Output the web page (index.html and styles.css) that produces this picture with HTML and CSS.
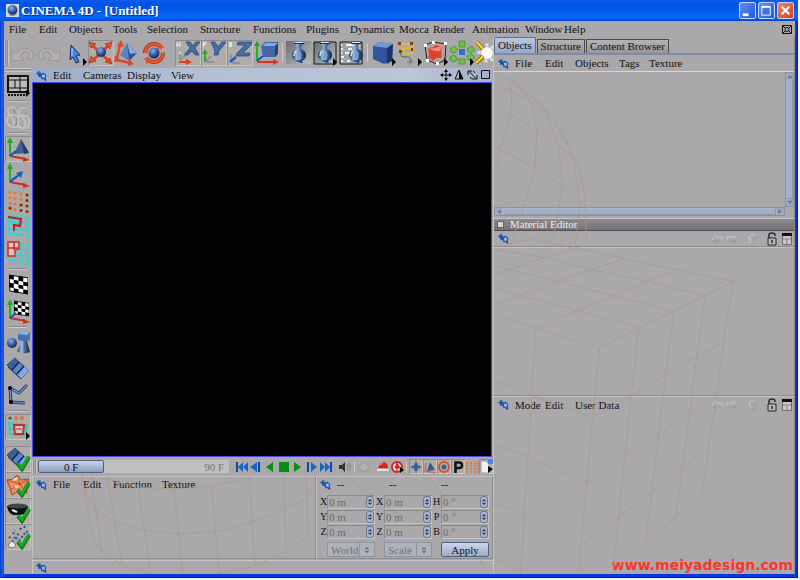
FILE: index.html
```html
<!DOCTYPE html>
<html lang="en">
<head>
<meta charset="utf-8">
<title>CINEMA 4D - [Untitled]</title>
<link rel="stylesheet" href="styles.css">
</head>
<body>
<svg class="defs" aria-hidden="true">
  <defs>
    <linearGradient id="blue" x1="0" y1="0" x2="1" y2="1"><stop offset="0" stop-color="#86a9e0"/><stop offset=".5" stop-color="#4668a8"/><stop offset="1" stop-color="#1d3264"/></linearGradient>
    <radialGradient id="ball" cx=".4" cy=".3" r=".7"><stop offset="0" stop-color="#8fb2ee"/><stop offset=".5" stop-color="#3e65ad"/><stop offset="1" stop-color="#14254d"/></radialGradient>
    <linearGradient id="glass"><stop offset="0" stop-color="#1d304c"/><stop offset=".35" stop-color="#9fc0e6"/><stop offset=".6" stop-color="#41689a"/><stop offset="1" stop-color="#16263e"/></linearGradient>
    <linearGradient id="plate" x1="0" y1="0" x2="1" y2="1"><stop offset="0" stop-color="#686d70"/><stop offset="1" stop-color="#b9bdc0"/></linearGradient>
    <symbol id="pin" viewBox="0 0 12 12"><path d="M7 8l4 3.500" stroke="#3b4254" stroke-width="1.500"/><path d="M0 4l3-3 2 1v2l3-1 3 2v5H6L5 7 3 8 2 5z" fill="#1d4f9f"/><path d="M6 5h4v4H7z" fill="#5f9ff0"/><path d="M7 6h2v1H7z" fill="#e5f2ff"/><path d="M2 3l1-1 1 1" stroke="#5a86c4" fill="none"/></symbol>
    <symbol id="axes" viewBox="0 0 26 26"><path d="M5 20V5" stroke="#16b51c" stroke-width="2"/><path d="M5 1L2 7h6z" fill="#22a626"/><path d="M5 20l16 3" stroke="#d42c18" stroke-width="2"/><path d="M25 24l-7-3v5z" fill="#d42c18"/><path d="M5 20l6-5" stroke="#1452d0" stroke-width="2"/></symbol>
    <symbol id="vase" viewBox="0 0 26 26"><path d="M8 3q5-1.500 10 0l-3 3v3q5 2 5 6 0 4-4 6l1 2H9l1-2q-4-2-4-6 0-4 5-6V6z" fill="url(#glass)"/><path d="M8 3.500h10" stroke="#1d2c45"/><path d="M9 2.500h8" stroke="#d6e6fa"/><path d="M10 11q-2 2-2 5" stroke="#dcebff" stroke-width="1.500" fill="none"/><path d="M13 11q3 4 0 9" stroke="#7fa6d6" stroke-width="2" fill="none"/><path d="M10 21h6" stroke="#1d2c45"/></symbol>
    <symbol id="check" viewBox="0 0 26 26"><path d="M13 18l4 5 7-12" fill="none" stroke="#0b7512" stroke-width="4"/><path d="M13 17l4 5 7-12" fill="none" stroke="#18ad20" stroke-width="2.6"/></symbol>
    <symbol id="checker" viewBox="0 0 20 20"><path d="M0 0l20 3v17L1 17z" fill="#fff" stroke="#000"/><path d="M0 0l5 1v4L0 4zM10 1l5 1v5l-5-1zM5 5l5 1v4L5 9zM15 7l5 1v4l-5-1zM0 8l5 1v5l-5-1zM10 10l5 1v4l-5-1zM5 14l5 1v4l-5-1zM15 15l5 1v4l-5-1z"/></symbol>
    <symbol id="film" viewBox="0 0 26 26"><path d="M2 9l8-7 14 13-8 8z" fill="#5d83c4" stroke="#2c4678"/><path d="M2 9l8-7 4 4-7 8z" fill="#3d5f98"/><path d="M12 18l7-8 5 5-8 8z" fill="#7fa6ea"/><path d="M7 14l7-8M12 18l7-8" stroke="#15264a" stroke-width="1.500"/><path d="M3 11l13 12" stroke="#1d3260"/></symbol>
    <symbol id="updown" viewBox="0 0 8 12"><path d="M4 2l3 3H1zM4 10l3-3H1z" fill="currentColor"/></symbol>
    <symbol id="back" viewBox="0 0 12 12"><path d="M1 6l4-4v2h6v4H5v2z" fill="none" stroke="#c8c6c7"/><path d="M2 7l3 3V8h6" fill="none" stroke="#8c8b8e"/></symbol>
    <symbol id="forward" viewBox="0 0 12 12"><path d="M11 6L7 2v2H1v4h6v2z" fill="none" stroke="#c8c6c7"/><path d="M1 8h6v2l4-4" fill="none" stroke="#8c8b8e"/></symbol>
    <symbol id="up" viewBox="0 0 12 12"><path d="M6 1l4 4H8v6H4V5H2z" fill="none" stroke="#c8c6c7"/><path d="M8 11V5h3M4 11h4" fill="none" stroke="#8c8b8e"/></symbol>
    <symbol id="lock" viewBox="0 0 12 14"><path d="M3 6V3q0-2 3-2t3 2v1" fill="none" stroke="#29292b" stroke-width="1.500"/><path d="M2 6h8v7H2z" fill="#b8b6b9" stroke="#29292b"/><path d="M6 8v3" stroke="#29292b" stroke-width="1.500"/></symbol>
    <symbol id="sheet" viewBox="0 0 12 14"><path d="M1.500 2.500h9v10h-9z" fill="#c9c7ca" stroke="#6d6c70"/><path d="M1 1h10v3H1z" fill="#111"/><path d="M2 7h8M6 7v5" stroke="#858386"/></symbol>
    <symbol id="more" viewBox="0 0 26 26"><path d="M21 18l4 4-4 4z" fill="#000"/></symbol>
  </defs>
</svg>

<div class="window">
  <header class="titlebar">
    <svg class="appicon" viewBox="0 0 13 13" aria-hidden="true"><path d="M0 0h13v13H0z" fill="#d6d9df"/><circle cx="6.500" cy="6" r="5" fill="url(#ball)"/><path d="M3 11q5 2 8-1" stroke="#888" fill="none"/></svg>
    <h1>CINEMA 4D - [Untitled]</h1>
    <button class="win" aria-label="Minimize"><svg viewBox="0 0 16 16"><path d="M3 11h6v3H3z" fill="#fff"/></svg></button>
    <button class="win" aria-label="Maximize"><svg viewBox="0 0 16 16"><path d="M3 4h9v9H3z" fill="none" stroke="#fff"/><path d="M3 4h9" stroke="#fff" stroke-width="2"/></svg></button>
    <button class="win close" aria-label="Close"><svg viewBox="0 0 16 16"><path d="M4 4l8 8M12 4l-8 8" stroke="#fff" stroke-width="2"/></svg></button>
  </header>

  <nav class="menu mainmenu" aria-label="Main">
    <a class="c4" href="#">File</a><a class="c4" href="#">Edit</a><a class="c7" href="#">Objects</a><a class="c5" href="#">Tools</a><a class="c9" href="#">Selection</a><a class="c9" href="#">Structure</a><a class="c9" href="#">Functions</a><a class="c7" href="#">Plugins</a><a class="c8" href="#">Dynamics</a><a class="c5" href="#">Mocca</a><a class="c6" href="#">Render</a><a class="c9" href="#">Animation</a><a class="c6" href="#">Window</a><a class="c4" href="#">Help</a>
    <svg class="restore" viewBox="0 0 10 9" aria-hidden="true"><path d="M.5.5h9v8h-9z" fill="none" stroke="#111"/><circle cx="5" cy="4.500" r="2" fill="none" stroke="#111"/><path d="M1 1l2 2M9 1L7 3M1 8l2-2M9 8L7 6" stroke="#111"/></svg>
  </nav>

  <div class="main">
    <section class="left">
      <div class="toolbar">
        <i class="grip"></i>
        <button class="tool" aria-label="Undo"><svg viewBox="0 0 26 26"><path d="M2 21V10l4 4q8-10 16-3 3 4 0 8h-5q5-6-1-8-4 0-6 6l4 3z" fill="#b3b0ae" stroke="#999693"/></svg></button>
        <button class="tool" aria-label="Redo"><svg viewBox="0 0 26 26"><path d="M24 21V10l-4 4Q12 4 4 11q-3 4 0 8h5q-5-6 1-8 4 0 6 6l-4 3z" fill="#b3b0ae" stroke="#999693"/></svg></button>
        <button class="tool" aria-label="Live selection"><svg viewBox="0 0 26 26"><path d="M9 5l9 10-4 1 3 6-3 1-3-6-3 3z" fill="#4f83db" stroke="#142b60"/><path d="M10 8v8" stroke="#bdd7ff"/><use href="#more"/></svg></button>
        <button class="tool on" aria-label="Move"><svg viewBox="0 0 26 26"><path d="M4 5l18 17M4 21L22 4" stroke="#dc4222" stroke-width="2.500"/><path d="M1 2l7 2-5 4zM24 24l-7-2 5-4zM1 23l2-7 5 5zM24 2l-2 7-5-5z" fill="#e5512e" stroke="#8d2412" stroke-width=".6"/><circle cx="13" cy="12" r="5" fill="url(#ball)"/></svg></button>
        <button class="tool" aria-label="Scale"><svg viewBox="0 0 26 26"><path d="M13 3L6 15l9 6z" fill="#5c82c2"/><path d="M13 3l10 10-8 8z" fill="#2f4f8f"/><path d="M13 3l3 11 7-1z" fill="#86aade"/><path d="M3 19L6 5M3 20l13 3" stroke="#e34525" stroke-width="2.500" fill="none"/><path d="M7 0l3 7-7-1zM20 24l-6 2 1-7zM1 15l-1 7 6-1z" fill="#e34525"/></svg></button>
        <button class="tool" aria-label="Rotate"><svg viewBox="0 0 26 26"><circle cx="14" cy="13" r="9" fill="none" stroke="#a93019" stroke-width="4" stroke-dasharray="23 5"/><circle cx="14" cy="13" r="9" fill="none" stroke="#ee5330" stroke-width="2.500" stroke-dasharray="23 5"/><path d="M20 3l4 5-7 1zM7 24l-3-6 7 1z" fill="#e94b29"/><circle cx="14" cy="13" r="5.500" fill="url(#ball)"/></svg></button>
        <i class="gap"></i>
        <button class="tool on" aria-label="Lock X axis"><svg viewBox="0 0 26 26"><path d="M2 2v5M5 2v5M2 4.500h3" stroke="#eee"/><path d="M11 2h4l3 4 3-4h4l-5 6 4 7h-4l-3-4-4 4H9l6-7z" fill="#476da9" stroke="#233f70" stroke-width=".7"/><path d="M5 20v-7M5 20l6-5" stroke="#8b898c" stroke-width="1.500"/><path d="M3 14l2-3 2 3z" fill="#ccc"/><path d="M4 22h8" stroke="#df3c20" stroke-width="2"/><path d="M11 19l6 3-6 3z" fill="#df3c20"/></svg></button>
        <button class="tool on" aria-label="Lock Y axis"><svg viewBox="0 0 26 26"><path d="M2.500 7V2.500h2v2h-2" stroke="#eee" fill="none"/><path d="M10 2h4l3 5 4-5h4l-7 9-1 4h-4l1-4z" fill="#476da9" stroke="#233f70" stroke-width=".7"/><path d="M4 22V13" stroke="#22b323" stroke-width="2"/><path d="M4 9l3 5H1z" fill="#22b323"/><path d="M5 22h8M5 21l5-5" stroke="#8b898c" stroke-width="1.500"/></svg></button>
        <button class="tool on" aria-label="Lock Z axis"><svg viewBox="0 0 26 26"><path d="M2.500 2.500h2v4h-2zM2 4.500h3" stroke="#eee" fill="none"/><path d="M11 2h14l-1 3-8 8h7l-1 3H9l1-3 8-8h-8z" fill="#476da9" stroke="#233f70" stroke-width=".7"/><path d="M4 22v-8M5 23h8" stroke="#8b898c" stroke-width="1.500"/><path d="M3 22l6-5" stroke="#1658da" stroke-width="2.500"/></svg></button>
        <button class="tool" aria-label="Coordinate system"><svg viewBox="0 0 26 26"><path d="M8 6l4-4h14l-3 4v11H10z" fill="#4168ab"/><path d="M9 6l4-3h12l-3 3z" fill="#83a9e1"/><path d="M22 6l3-3v11l-3 3z" fill="#273f72"/><path d="M4 21V3" stroke="#18b522" stroke-width="2"/><path d="M4 1L1 6h6z" fill="#1aaa22"/><path d="M4 22h17" stroke="#dc3220" stroke-width="2"/><path d="M26 22l-6-3v6z" fill="#dc3220"/><path d="M4 21l6-5" stroke="#1452d0" stroke-width="2"/></svg></button>
        <i class="sep"></i>
        <button class="tool" aria-label="Render view"><svg viewBox="0 0 26 26"><path d="M0 1h25v23H0z" fill="url(#plate)"/><use href="#vase"/></svg></button>
        <button class="tool" aria-label="Render to picture viewer"><svg viewBox="0 0 26 26"><path d="M2 2h22v22H2z" fill="url(#plate)" stroke="#151515"/><use href="#vase"/><use href="#more"/></svg></button>
        <button class="tool" aria-label="Render settings"><svg viewBox="0 0 26 26"><path d="M2 2h22v22H2z" fill="#a4a7a9" stroke="#151515"/><path d="M3 5h19M3 9h11M3 13h9M3 17h9M3 21h9" stroke="#f4f4f4" stroke-width="2"/><path d="M4 5h4M5 9h5M4 13h3M6 17h5M5 21h4" stroke="#444"/><use href="#vase" x="5"/></svg></button>
        <i class="sep"></i>
        <button class="tool" aria-label="Cube"><svg viewBox="0 0 26 26"><path d="M2 6l6-4 14 2-1 17-8 3L2 19z" fill="#32549a"/><path d="M2 6l6-4 14 2-6 4z" fill="#7199da"/><path d="M16 8l6-4-1 17-5 3z" fill="#1b3369"/><use href="#more"/></svg></button>
        <button class="tool" aria-label="Spline"><svg viewBox="0 0 26 26"><path d="M2 4h12q4 1 0 4-9 0-10 4 6 3 12 1" fill="none" stroke="#ecc30c" stroke-width="1.500"/><path d="M5 12q-4 4 2 5 8-1 7 5" fill="none" stroke="#676260"/><path d="M1 2h3v3H1zM13 2h3v3h-3zM2 10h3v3H2zM14 8h2v3h-2z" fill="#8b3b0b"/><path d="M10 22h6M13 19v6" stroke="#777"/><use href="#more"/></svg></button>
        <button class="tool" aria-label="HyperNURBS"><svg viewBox="0 0 26 26"><path d="M2 5l8-3 13 2-1 16-8 4L4 20z" fill="#b1a5a3" stroke="#222"/><path d="M5 8q5 0 8-3 4 2 7 1-3 6-1 12-6-1-9 3-2-3-5-3 2-4 0-10z" fill="#dd432f"/><path d="M5 8q7 1 10-1l5-1-3 5q-5 1-12-3z" fill="#f28b79"/><path d="M1 4h3v3H1zM9 1h3v3H9zM21 2h3v3h-3zM3 19h3v3H3zM13 22h3v3h-3z" fill="#fff"/><use href="#more"/></svg></button>
        <button class="tool" aria-label="Array"><svg viewBox="0 0 26 26"><g fill="#6fc344" stroke="#388d20" stroke-width=".7"><path d="M10 1h6v6h-6zM10 19h6v5h-6zM1 9l4-3 4 3-3 4-4-1zM19 8l4-2 3 4-4 3-4-2zM1 17l4-2 4 4-4 3-4-2zM18 16l4-2 4 3-3 4-5-2z"/></g><path d="M10 9h6v6h-6z" fill="#326ed0"/><use href="#more"/></svg></button>
        <button class="tool" aria-label="Light"><svg viewBox="0 0 26 26"><circle cx="12" cy="13" r="6" fill="#fff"/><circle cx="12" cy="13" r="8" fill="none" stroke="#e9e7dc" stroke-width="3" stroke-dasharray="3 3"/><path d="M2 2l6 7M1 23l7-7" stroke="#8b7007" stroke-width="4"/><path d="M2 2l6 7M1 23l7-7" stroke="#f5dd34" stroke-width="2"/></svg></button>
      </div>

      <div class="work">
        <div class="rail">
          <i class="hgrip"></i>
          <button class="tool" aria-label="Layout"><svg viewBox="0 0 26 26"><path d="M3 4h20v16H3z" fill="#bdbbba" stroke="#111" stroke-width="2"/><path d="M3 8h20M10 8v8M15 4v16M3 16h20" stroke="#111"/><path d="M3 23h17" stroke="#111" stroke-width="2" stroke-dasharray="2 1"/><path d="M21 18l4 3-4 4z"/></svg></button>
          <i class="hsep"></i>
          <button class="tool" aria-label="Make editable"><svg viewBox="0 0 26 26"><g fill="none" stroke="#c7c5c3" stroke-width="1.500"><circle cx="7" cy="7" r="4"/><circle cx="18" cy="8" r="4"/><path d="M4 11q-5 9 3 12h5q3-8-1-12zM14 12q-4 9 2 12h6q5-7 0-12zM6 13q4 3 2 8M17 14q5 2 3 8"/></g><path d="M9 5q3 3 0 6M20 5q4 3 0 6M11 13q2 5 0 9" stroke="#858381" fill="none"/></svg></button>
          <i class="hsep"></i>
          <button class="tool on" aria-label="Model"><svg viewBox="0 0 26 26"><path d="M16 3l8 14-15 1z" fill="#405f9f"/><path d="M16 3l8 14-5 1z" fill="#263d70"/><use href="#axes"/></svg></button>
          <button class="tool" aria-label="Object axis"><svg viewBox="0 0 26 26"><use href="#axes"/><path d="M7 18l7-5" stroke="#1452d0" stroke-width="2"/><path d="M18 9l-2 7-5-5z" fill="#1b5bb9"/></svg></button>
          <button class="tool" aria-label="Points"><svg viewBox="0 0 26 26"><path d="M5 4v18M10 5v18M16 6v18M22 7v18" stroke="#f57417" stroke-width="3" stroke-dasharray="0 5.500" stroke-linecap="round"/><path d="M16 17v7M22 7v18M5 20v2" stroke="#86330e" stroke-width="3" stroke-dasharray="0 5.500" stroke-linecap="round"/></svg></button>
          <button class="tool" aria-label="Edges"><svg viewBox="0 0 26 26"><path d="M3 2l20 2v18L4 20zM3 8l19 2M4 14l19 2M9 3l1 17M16 3v18" fill="none" stroke="#25d7db" stroke-width="1.500"/><path d="M3 3l13 2-1 7-6-1v6" fill="none" stroke="#b22422" stroke-width="2"/></svg></button>
          <button class="tool" aria-label="Polygons"><svg viewBox="0 0 26 26"><path d="M3 2l20 2v20L4 20zM3 8l19 2M4 14l19 2M9 3l1 17M16 3v18" fill="none" stroke="#25d7db" stroke-width="1.500"/><path d="M3 2h11v7l-4 1v6H3z" fill="#d7c5c3" stroke="#d52c26" stroke-width="1.500"/><path d="M3 8h11M9 2v8" stroke="#d52c26" stroke-width="1.500"/></svg></button>
          <i class="hsep"></i>
          <button class="tool" aria-label="Texture"><svg viewBox="0 0 26 26"><use href="#checker" x="4" y="2" width="19" height="21"/></svg></button>
          <button class="tool" aria-label="Texture axis"><svg viewBox="0 0 26 26"><use href="#checker" x="9" y="2" width="15" height="17"/><use href="#axes"/></svg></button>
          <i class="hsep"></i>
          <button class="tool" aria-label="Object tool"><svg viewBox="0 0 26 26"><path d="M13 4l4-3 8 1v8l-4 2-8-2z" fill="#4a70b4"/><path d="M13 4l4-3 8 1-3 3z" fill="#8fb2ea"/><path d="M17 11h5l3 11q-6 3-13-1z" fill="url(#glass)"/><circle cx="7" cy="13" r="5" fill="url(#ball)"/></svg></button>
          <button class="tool" aria-label="Animation tool"><svg viewBox="0 0 26 26"><use href="#film"/></svg></button>
          <button class="tool" aria-label="Inverse kinematics"><svg viewBox="0 0 26 26"><path d="M5 6l1 14 14 1M5 6l9 5 8-8" fill="none" stroke="#182b50" stroke-width="3"/><path d="M5 6l1 14 14 1M5 6l9 5 8-8" fill="none" stroke="#6a90cc" stroke-width="1.500"/><circle cx="5" cy="6" r="2"/><circle cx="6" cy="20" r="2"/></svg></button>
          <i class="hsep"></i>
          <button class="tool on" aria-label="Selection filter"><svg viewBox="0 0 26 26"><path d="M5 4h18" stroke="#873a19" stroke-width="3" stroke-dasharray="0 6" stroke-linecap="round"/><path d="M11 4h6.500" stroke="#f57417" stroke-width="3" stroke-dasharray="0 6" stroke-linecap="round"/><path d="M4 9l18 2-2 11-15-2zM4 15l17 1M10 9v12" fill="none" stroke="#25cbd1" stroke-width="2"/><path d="M9 11h10l-1 9h-8z" fill="#d0c2c1" stroke="#c62c28" stroke-width="2"/><path d="M11 15h6" stroke="#c62c28"/><use href="#more"/></svg></button>
          <i class="hsep blank"></i>
          <button class="tool on" aria-label="Use animation"><svg viewBox="0 0 26 26"><use href="#film"/><use href="#check"/></svg></button>
          <button class="tool on" aria-label="Use deformers"><svg viewBox="0 0 26 26"><path d="M2 8l6-1 4-4 4 5 8-1-4 8 2 6-9-2-6 4-2-7z" fill="#ee8b62" stroke="#a84420"/><path d="M2 8l13 4 9-5M5 18l10-6 5 7M12 3l3 9" fill="none" stroke="#b7552e"/><path d="M8 8l5-2M10 15l4-1" stroke="#ffd0af" stroke-width="2"/><use href="#check"/></svg></button>
          <button class="tool on" aria-label="Use generators"><svg viewBox="0 0 26 26"><path d="M2 8h21q0 8-8 9H8Q3 15 2 8z" fill="#0d1212"/><ellipse cx="12.500" cy="8" rx="10" ry="2.500" fill="#3c4947"/><path d="M7 12l5 2" stroke="#e3eeee" stroke-width="2"/><use href="#check"/></svg></button>
          <button class="tool on" aria-label="Use expressions"><svg viewBox="0 0 26 26"><path d="M7 18l3-5M11 15l3-7M14 17l6-8M8 10l2-4M15 4l2 3M19 2l2 3M4 14l2-2M21 8l3-1" stroke="#2654a6" stroke-width="2" stroke-dasharray="2 2"/><path d="M3 21l4-4 4 4-3 3-4-1z" fill="#eee" stroke="#777"/><use href="#check"/></svg></button>
        </div>

        <div class="center">
          <nav class="menu viewbar" aria-label="View">
            <svg class="pin"><use href="#pin"/></svg>
            <a class="c4" href="#">Edit</a><a class="c7" href="#">Cameras</a><a class="c7" href="#">Display</a><a class="c4" href="#">View</a>
            <svg class="viewicons" viewBox="0 0 52 12" aria-hidden="true"><path d="M6 1v10M1 6h10" stroke="#111"/><path d="M6 0l2 3H4zM6 12l2-3H4zM0 6l3-2v4zM12 6L9 4v4z"/><path d="M19 1l4 9h-8z" fill="none" stroke="#111"/><path d="M19 1v9h4z"/><path d="M28 6V2h4M37 6v4h-4M29 2.500L36 9.500" fill="none" stroke="#111"/><path d="M30 8a3 3 0 0 0 3 2M35 4a3 3 0 0 0-2-2" fill="none" stroke="#111"/><path d="M41.500 1.500h8v8h-8z" fill="none" stroke="#111"/></svg>
          </nav>
          <div class="viewport"></div>

          <div class="timeline">
            <i class="grip"></i>
            <div class="slider"><input type="range" min="0" max="90" value="0" aria-label="Current frame"><span class="now">0 F</span><span class="end">90 F</span></div>
            <div class="transport">
              <button aria-label="Go to start"><svg viewBox="0 0 14 14"><path d="M2 2v10" stroke="#0b4c9f" stroke-width="2"/><path d="M8 2v10L3 7zM13 2v10L8 7z" fill="#1666c6"/></svg></button>
              <button aria-label="Previous frame"><svg viewBox="0 0 14 14"><path d="M8 2v10L1 7z" fill="#1666c6"/><path d="M10 2v10" stroke="#0b4c9f" stroke-width="2"/></svg></button>
              <button aria-label="Play backwards"><svg viewBox="0 0 14 14"><path d="M10 2v10L3 7z" fill="#078c17"/></svg></button>
              <button aria-label="Stop"><svg viewBox="0 0 14 14"><path d="M2 2h10v10H2z" fill="#078c17"/></svg></button>
              <button aria-label="Play"><svg viewBox="0 0 14 14"><path d="M3 2v10l7-5z" fill="#078c17"/></svg></button>
              <button aria-label="Next frame"><svg viewBox="0 0 14 14"><path d="M6 2v10l6-5z" fill="#1666c6"/><path d="M3 2v10" stroke="#0b4c9f" stroke-width="2"/></svg></button>
              <button aria-label="Go to end"><svg viewBox="0 0 14 14"><path d="M12 2v10" stroke="#0b4c9f" stroke-width="2"/><path d="M1 2v10l5-5zM6 2v10l5-5z" fill="#1666c6"/></svg></button>
              <i class="tick none"></i>
              <button aria-label="Sound"><svg viewBox="0 0 14 14"><path d="M1 5h3l3-3v10L4 9H1z" fill="#333"/><path d="M9 4q2 3 0 6M11 3q3 4 0 8" fill="none" stroke="#858385"/></svg></button>
              <i class="tick"></i>
              <button aria-label="Record"><svg viewBox="0 0 14 14"><circle cx="7" cy="7" r="4.500" fill="#b3b1ac" stroke="#999792"/></svg></button>
              <i class="tick none"></i>
              <button aria-label="Record active objects"><svg viewBox="0 0 14 14"><path d="M2 8q2-6 6-6 4 1 4 6z" fill="#df2019"/><path d="M1 9h12v2H1z" fill="#ecdcd9"/><path d="M4 5l3-2" stroke="#ff9a8d"/></svg></button>
              <button aria-label="Autokeying"><svg viewBox="0 0 14 14"><circle cx="7" cy="7" r="5" fill="#ecdcd9" stroke="#d82320" stroke-width="2"/><path d="M7 3l3 5H5zM7 8v4" fill="#d82320" stroke="#d82320"/><path d="M10 7l4 3-4 3z"/></svg></button>
              <i class="tick"></i>
              <button class="on" aria-label="Key position"><svg viewBox="0 0 14 14"><path d="M7 1v12M1 7h12" stroke="#d56b4c" stroke-width="2"/><path d="M7 3v8M3 7h8" stroke="#2b60a8" stroke-width="3"/></svg></button>
              <button class="on" aria-label="Key scale"><svg viewBox="0 0 14 14"><path d="M7 2l5 8-8 1z" fill="#325b9c"/><path d="M3 3l-1 8 10 2" fill="none" stroke="#d56b4c" stroke-width="1.500"/></svg></button>
              <button class="on" aria-label="Key rotation"><svg viewBox="0 0 14 14"><circle cx="7" cy="7" r="5" fill="none" stroke="#de502e" stroke-width="2"/><circle cx="7" cy="7" r="2.500" fill="#365e9c"/></svg></button>
              <button class="on" aria-label="Key parameter"><svg viewBox="0 0 14 14"><path d="M4.500 13V2.500H8q3 0 3 2.700T8 8H5" fill="none" stroke="#111" stroke-width="2.500"/></svg></button>
              <button aria-label="Point level animation"><svg viewBox="0 0 14 14"><path d="M2 2v11M6 2v11M10 2v11M13 2v11" stroke="#e08048" stroke-width="2" stroke-dasharray="2 1"/></svg></button>
              <button class="on" aria-label="Options"><svg viewBox="0 0 14 14"><path d="M2 1h5l3 3v9H2z" fill="#f0f0f2" stroke="#99979a"/><path d="M9 0h5v4H9z" fill="#4b86df"/><path d="M9 6l5 3-5 4z"/></svg></button>
            </div>
          </div>

          <div class="lower">
            <svg class="wires" viewBox="0 0 461 98" preserveAspectRatio="xMinYMin slice" aria-hidden="true"><path d="M50 0l4 20 11 15 21 12 30 8 32 3 37-3 33-8 50-21 32-26M68 1l36 10 38 2 38-3 40-9M50 0l10 60 10 16 20 13 29 9M59 0l11 76M75 0l15 89M106 10l13 88M142 13l9 85M180 10l7 88M217 0l6 90M252 0l2 75M274 0l2 61M187 98l36-8 31-15 22-14 38-37M314 0l50 37 90 40M397 0l35 50 19 40"/></svg>
            <section class="materials">
              <nav class="menu" aria-label="Materials"><svg class="pin"><use href="#pin"/></svg><a class="c4" href="#">File</a><a class="c4" href="#">Edit</a><a class="c8" href="#">Function</a><a class="c7" href="#">Texture</a></nav>
            </section>
            <form class="coords">
              <div class="heads"><svg class="pin"><use href="#pin"/></svg><span>--</span><span>--</span><span>--</span></div>
              <div class="fields">
                <label for="px">X</label><div class="num"><input id="px" value="0 m"><button type="button" aria-label="Step position X"><svg><use href="#updown"/></svg></button></div>
                <label for="sx">X</label><div class="num"><input id="sx" value="0 m"><button type="button" aria-label="Step size X"><svg><use href="#updown"/></svg></button></div>
                <label for="rh">H</label><div class="num"><input id="rh" value="0 °"><button type="button" aria-label="Step rotation H"><svg><use href="#updown"/></svg></button></div>
                <label for="py">Y</label><div class="num"><input id="py" value="0 m"><button type="button" aria-label="Step position Y"><svg><use href="#updown"/></svg></button></div>
                <label for="sy">Y</label><div class="num"><input id="sy" value="0 m"><button type="button" aria-label="Step size Y"><svg><use href="#updown"/></svg></button></div>
                <label for="rp">P</label><div class="num"><input id="rp" value="0 °"><button type="button" aria-label="Step rotation P"><svg><use href="#updown"/></svg></button></div>
                <label for="pz">Z</label><div class="num"><input id="pz" value="0 m"><button type="button" aria-label="Step position Z"><svg><use href="#updown"/></svg></button></div>
                <label for="sz">Z</label><div class="num"><input id="sz" value="0 m"><button type="button" aria-label="Step size Z"><svg><use href="#updown"/></svg></button></div>
                <label for="rb">B</label><div class="num"><input id="rb" value="0 °"><button type="button" aria-label="Step rotation B"><svg><use href="#updown"/></svg></button></div>
                <i></i><div class="pick"><select aria-label="Coordinate space"><option>World</option></select><svg><use href="#updown"/></svg></div>
                <i></i><div class="pick"><select aria-label="Size mode"><option>Scale</option></select><svg><use href="#updown"/></svg></div>
                <i></i><button type="button" class="apply">Apply</button>
              </div>
            </form>
            <footer class="status"><svg class="pin"><use href="#pin"/></svg></footer>
          </div>
        </div>
      </div>
    </section>

    <aside class="right">
      <div class="tabs" role="tablist"><button role="tab" aria-selected="true">Objects</button><button role="tab">Structure</button><button role="tab">Content Browser</button></div>
      <nav class="menu objectsmenu" aria-label="Objects"><svg class="pin"><use href="#pin"/></svg><a class="c4" href="#">File</a><a class="c4" href="#">Edit</a><a class="c7" href="#">Objects</a><a class="c4" href="#">Tags</a><a class="c7" href="#">Texture</a></nav>
      <div class="objects">
        <div></div>
        <div class="scroll vertical"><svg viewBox="0 0 8 8"><path d="M4 2l3 4H1z"/></svg><i></i><svg viewBox="0 0 8 8"><path d="M4 6l3-4H1z"/></svg></div>
        <div class="scroll"><svg viewBox="0 0 8 8"><path d="M2 4l4-3v6z"/></svg><i></i><svg viewBox="0 0 8 8"><path d="M6 4L2 1v6z"/></svg></div>
      </div>
      <h2><i></i>Material Editor</h2>
      <div class="menu panelbar"><svg class="pin"><use href="#pin"/></svg><span class="navicons"><svg><use href="#back"/></svg><svg><use href="#forward"/></svg><svg class="spaced"><use href="#up"/></svg><svg class="tall spaced"><use href="#lock"/></svg><svg class="tall"><use href="#sheet"/></svg></span></div>
      <div class="editor"></div>
      <nav class="menu panelbar attributes" aria-label="Attributes"><svg class="pin"><use href="#pin"/></svg><a class="c4" href="#">Mode</a><a class="c4" href="#">Edit</a><a class="c9" href="#">User Data</a><span class="navicons"><svg><use href="#back"/></svg><svg><use href="#forward"/></svg><svg class="spaced"><use href="#up"/></svg><svg class="tall spaced"><use href="#lock"/></svg><svg class="tall"><use href="#sheet"/></svg></span></nav>
      <p class="site">www.meiyadesign.com</p>
      <svg class="wires" viewBox="494 37 301 538" preserveAspectRatio="xMinYMin slice" aria-hidden="true">
        <path d="M495 73l13 6 22 16 18 18 12 12 13 31 5 9 7 30 2 50M508 79l4 12-1 23-10 35-6 18M517 83l15 20 5 28-2 37-9 32-15 45M533 95l13 17 13 34 3 40-7 44-5 13M555 122l19 36 6 47-5 42M495 82l37 21 14 9M495 107l16 8 26 15 22 16 15 12M495 147l40 21 27 18 25 21M495 197l19 10M512 243l20-3 40 8"/>
        <path d="M495 250l49 8 49 12 54 12 59 14M495 266l63 16 56 14 60 16M495 289l26 7 56 15 62 17M495 316l41 13 64 19 134-66-58-12-52-11-47-11M536 329l41-18 37-15 33-14 29-12M495 306l26-10 37-14 35-12 31-11M495 276l14-6 35-12 33-10M734 282l-10 59-6 52-9 55-7 49M706 296l-9 61-7 57-7 54-7 50M674 312l-8 64-7 59-7 58-6 51M639 328l-7 65-7 66-6 58-6 57M600 348l-7 70-6 66-6 62-2 28M536 329l-4 65-4 64-4 59-3 57M495 381l37 15 61 22 37-21 36-21 31-19 28-15M495 445l33 13 59 26 38-26 34-23 30-21 28-17M495 503l29 14 57 29 39-29 32-24 31-25 26-20M495 559l26 14M613 574l33-30 30-26 26-21"/>
      </svg>
    </aside>
  </div>
</div>
</body>
</html>
```
FILE: styles.css
```css
* { box-sizing: border-box; }
html, body { height: 100%; }
body {
  margin: 0;
  padding: 0 2px 2px 0;
  overflow: hidden;
  background: #f4f4f8;
  color: #111;
  font: 11px/14px "Liberation Serif", serif;
}
button, input, select { margin: 0; padding: 0; border: 0; border-radius: 0; background: none; color: inherit; font: inherit; }
button { display: block; }
a { color: inherit; text-decoration: none; white-space: nowrap; }
svg { display: block; flex: none; }
i { display: block; flex: none; }
.defs { position: absolute; width: 0; height: 0; }

.window {
  display: flex;
  flex-direction: column;
  height: 100%;
  padding: 0 3px 3px 4px;
  background: linear-gradient(90deg, #0838c8, #1668f8 3px, #0838d8 4px, #0838d8 calc(100% - 3px), #0838d8 calc(100% - 2px), #0420a8);
  border-bottom: 1px solid #0420a0;
}
.titlebar {
  display: flex;
  align-items: center;
  flex: none;
  height: 21px;
  margin: 0 -3px 0 -4px;
  padding: 0 4px 0 6px;
  gap: 2px;
  background: linear-gradient(#0c5cf0, #0454e4 3px, #0458ec 12px, #0468fc 14px, #0464f8 18px, #0440d0);
}
.appicon { width: 13px; height: 13px; }
h1 { flex: 1; margin: 0; color: #fff; font: bold 13px/16px "Liberation Serif", serif; text-shadow: 1px 1px #06308c; }
.win { width: 17px; height: 17px; border: 1px solid #c8d8f8; border-radius: 2px; background: linear-gradient(135deg, #6090f0, #2058d8); }
.win.close { background: linear-gradient(135deg, #f08868, #d83c18); }
.win svg { width: 15px; height: 15px; }

.menu { display: flex; align-items: center; flex: none; }
.pin { width: 11px; height: 11px; margin-right: 6px; }
.c4 { width: 30px; }
.c5 { width: 34px; }
.c6 { width: 39px; }
.c7 { width: 44px; }
.c8 { width: 49px; }
.c9 { width: 53px; }
.mainmenu { height: 16px; padding: 0 3px 0 5px; background: #aaa8ab; }
.restore { width: 10px; height: 9px; margin-left: auto; }

.main { display: grid; grid-template-columns: minmax(0, 1fr) 302px; flex: 1; min-height: 0; background: #aaa8ab; }
.left { display: flex; flex-direction: column; min-width: 0; min-height: 0; }
.toolbar { display: flex; flex: none; align-items: center; height: 31px; overflow: hidden; }
.grip { width: 5px; height: 26px; margin-right: 1px; border: solid #c8c6c8; border-width: 0 1px; box-shadow: inset 1px 0 #8c8a8d, inset -1px 0 #8c8a8d; }
.gap { width: 9px; }
.sep { width: 1px; height: 18px; margin: 0 3px; background: #d0ced0; }
.tool { flex: none; width: 26px; height: 26px; }
.tool svg { width: 26px; height: 26px; }
.on { background: #b0aca8; box-shadow: inset 1px 1px #8c8a8a, inset -1px -1px #c8c6c4; }

.work { display: grid; grid-template-columns: 28px minmax(0, 1fr); flex: 1; min-height: 0; }
.rail { display: flex; flex-direction: column; align-items: center; min-height: 0; }
.hgrip { width: 26px; height: 4px; border: solid #c8c6c8; border-width: 1px 0; box-shadow: inset 0 1px #8c8a8d; }
.hsep { width: 18px; height: 2px; margin: 2px 0; border-top: 1px solid #868488; border-bottom: 1px solid #d0ced0; }
.blank { border: 0; }
.center { display: flex; flex-direction: column; min-width: 0; min-height: 0; }
.viewbar { height: 14px; padding: 0 3px 0 4px; margin-right: 1px; background: linear-gradient(90deg, #9cacc8, #b4bfd4 160px, #bcc4d8 380px, #a4b0c8); }
.viewicons { width: 52px; height: 12px; margin-left: auto; margin-right: -3px; }
.viewport { flex: 1; margin-right: 1px; border: 1px solid #5048e8; background: #030104; }

.timeline { display: flex; flex: none; align-items: center; height: 19px; }
.timeline .grip { height: 14px; }
.slider { position: relative; flex: 1; height: 13px; margin-right: 6px; background: #c0bec0; }
.slider input { display: block; appearance: none; width: 100%; height: 13px; }
.slider input::-webkit-slider-thumb { appearance: none; width: 66px; height: 13px; border: 1px solid #506080; border-radius: 2px; background: linear-gradient(#c8d4ec, #8c9cbc); }
.slider span { position: absolute; top: 0; pointer-events: none; }
.now { left: 26px; }
.end { right: 5px; color: #777; }
.transport { display: flex; align-items: center; }
.transport button { width: 14px; height: 15px; }
.transport svg { width: 14px; height: 14px; }
.tick { width: 1px; height: 10px; margin: 0 2px; background: #c8c6c8; }
.none { background: none; }

.lower { position: relative; display: grid; grid-template-columns: minmax(0, 1fr) 177px; grid-template-rows: 83px 15px; flex: none; }
.wires { position: absolute; inset: 0; width: 100%; height: 100%; pointer-events: none; fill: none; stroke: #a39c85; stroke-opacity: 0.7; }
.materials, .coords { border: 1px solid #8c8a8d; border-top-color: #c4c2c4; border-left-color: #c4c2c4; }
.materials { padding: 0 3px; }
.coords { position: relative; padding: 0 3px; }
.heads { display: grid; grid-template-columns: 17px repeat(3, 52px); align-items: center; height: 14px; }
.fields { display: grid; grid-template-columns: 7px minmax(0, 1fr) 9px minmax(0, 1fr) 9px minmax(0, 1fr); grid-auto-rows: 14px; row-gap: 1px; padding-top: 4px; }
.fields label { align-self: center; text-align: center; font-size: 10px; }
.num { display: flex; border: 1px solid #8c8a8d; border-right-color: #c4c2c4; border-bottom-color: #c4c2c4; }
.num input { flex: 1; width: 0; padding-left: 1px; color: #6c6a6e; line-height: 12px; }
.num button { width: 8px; height: 12px; border: 1px solid #68788f; border-radius: 3px; background: #a8b8d4; color: #303848; }
.num svg { width: 6px; height: 10px; }
.pick { display: flex; align-items: center; height: 15px; margin-top: 2px; border: 1px solid #8c94a4; background: #b0b2ba; color: #6c7078; }
.pick select { appearance: none; flex: 1; width: 0; height: 13px; padding-left: 3px; border-right: 1px solid #8c94a4; }
.pick svg { width: 8px; height: 10px; margin: 0 3px; }
.apply { height: 15px; margin-top: 2px; border: 1px solid #506080; border-radius: 2px; background: linear-gradient(#ccd6ec, #9cacc8); text-align: center; }
.status { display: flex; align-items: center; grid-column: 1 / -1; margin-top: 1px; padding-left: 3px; border-top: 1px solid #c8c6c8; border-left: 1px solid #c8c6c8; }

.right { position: relative; display: flex; flex-direction: column; min-width: 0; min-height: 0; border-left: 1px solid #c4c2c4; border-right: 1px solid #8c8a8d; background: #aaa8ab; }
.tabs { display: flex; align-items: flex-end; flex: none; height: 18px; gap: 1px; border-bottom: 2px solid #7c8ca4; }
.tabs button { height: 14px; padding: 0 3px; border: 1px solid #4c4c50; border-bottom: 0; background: linear-gradient(#b4b2b4, #989698); line-height: 13px; }
.tabs [aria-selected="true"] { height: 16px; border-color: #60708c; border-radius: 2px 2px 0 0; background: linear-gradient(#b8c8e4, #98a8c4); }
.objectsmenu { height: 17px; padding-left: 4px; border-bottom: 1px solid #d8d6d8; }
.objects { display: grid; grid-template-columns: minmax(0, 1fr) 9px; grid-template-rows: 1fr 9px; flex: none; height: 144px; }
.scroll { display: flex; border: 1px solid #8494ac; background: #a0abbd; }
.scroll i { flex: 1; border: 1px solid #a8b8d0; border-right-color: #8898b0; border-bottom-color: #8898b0; background: #a4afc0; }
.scroll svg { width: 8px; height: 7px; fill: #68788f; }
.vertical { flex-direction: column; }
h2 { display: flex; align-items: center; flex: none; gap: 6px; height: 13px; margin: 2px 0 0; padding-left: 3px; border-top: 1px solid #c8c6c8; border-bottom: 1px solid #4c4a50; background: linear-gradient(#8c8a8d, #747276); color: #f0f0f0; font: 11px/11px "Liberation Serif", serif; }
h2 i { width: 7px; height: 7px; border: 1px solid #606064; background: #d8d8d8; }
.panelbar { height: 15px; padding: 0 1px 0 4px; }
.navicons { display: flex; align-items: center; gap: 3px; margin-left: auto; }
.navicons svg { width: 12px; height: 12px; }
.navicons .tall { height: 14px; }
.navicons .spaced { margin-left: 5px; }
.editor { flex: none; height: 150px; border-top: 1px solid #8c8a8d; border-bottom: 1px solid #8c8a8d; box-shadow: inset 0 1px #c4c2c4; }
.attributes { height: 16px; border-top: 1px solid #c4c2c4; }
.site { margin: auto 1px 0 auto; color: #ff342c; font: bold 14px/18px "DejaVu Sans", sans-serif; }
```
